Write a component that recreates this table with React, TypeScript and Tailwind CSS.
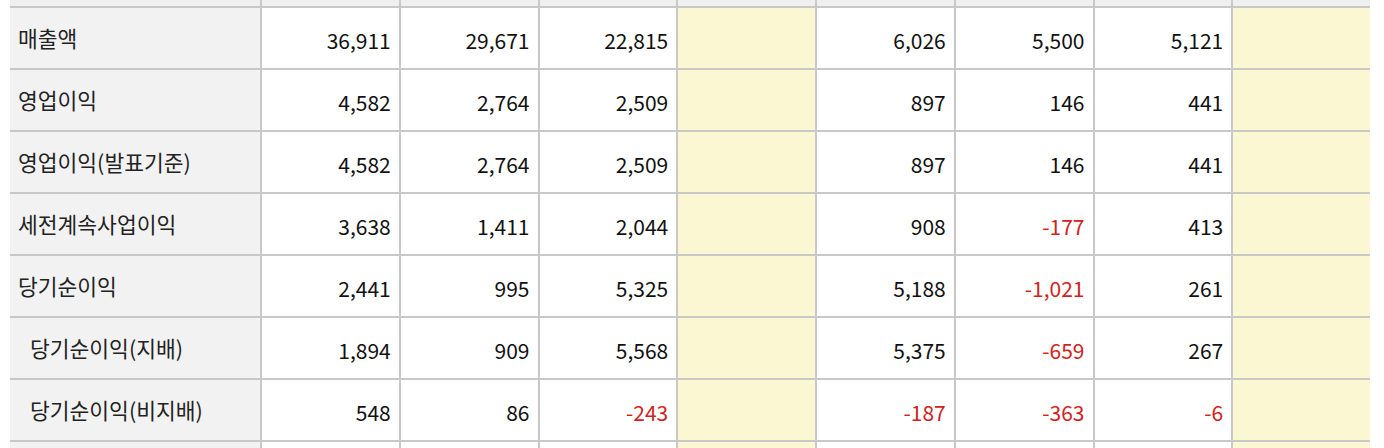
import React from 'react'

type Row = { label: string; indent?: boolean; values: (number | null)[] }

const rows: Row[] = [
  { label: '매출액', values: [36911, 29671, 22815, null, 6026, 5500, 5121, null] },
  { label: '영업이익', values: [4582, 2764, 2509, null, 897, 146, 441, null] },
  { label: '영업이익(발표기준)', values: [4582, 2764, 2509, null, 897, 146, 441, null] },
  { label: '세전계속사업이익', values: [3638, 1411, 2044, null, 908, -177, 413, null] },
  { label: '당기순이익', values: [2441, 995, 5325, null, 5188, -1021, 261, null] },
  { label: '당기순이익(지배)', indent: true, values: [1894, 909, 5568, null, 5375, -659, 267, null] },
  { label: '당기순이익(비지배)', indent: true, values: [548, 86, -243, null, -187, -363, -6, null] },
]

const fmt = (n: number) => n.toLocaleString('en-US')

// 4번째, 8번째 칸은 추정치 컬럼 (노란 배경)
const isEst = (i: number) => i === 3 || i === 7

function Cell({ value, index }: { value: number | null; index: number }) {
  return (
    <div
      className={`flex items-center justify-end pr-2 pt-1 text-[21px] ${isEst(index) ? 'bg-[#fcf7d3]' : 'bg-white'} ${
        value !== null && value < 0 ? 'text-[#d0231c]' : 'text-[#111]'
      }`}
    >
      {value !== null ? fmt(value) : ''}
    </div>
  )
}

export default function App() {
  return (
    <div className="w-[1384px] h-[448px] overflow-hidden bg-white pl-[10px] pr-[14px]">
      <div
        className="-mt-[55px] grid grid-cols-[250px_repeat(8,1fr)] gap-[2px] bg-[#c8c8c8] leading-none"
        style={{ fontFamily: '"Noto Sans CJK KR", "Noto Sans", sans-serif' }}
      >
        {/* 헤더 (잘린 부분) */}
        <div className="h-[61px] bg-[#f0f0f0]" />
        {Array.from({ length: 8 }).map((_, i) => (
          <div key={i} className="h-[61px] bg-[#f0f0f0]" />
        ))}

        {rows.map((row) => (
          <React.Fragment key={row.label}>
            <div
              className={`h-[60px] flex items-center text-[21.5px] bg-[#f2f2f2] text-[#222] ${row.indent ? 'pl-5' : 'pl-2'}`}
            >
              {row.label}
            </div>
            {row.values.map((v, i) => (
              <Cell key={i} value={v} index={i} />
            ))}
          </React.Fragment>
        ))}

        {/* 다음 행 (잘린 부분) */}
        <div className="h-[60px] bg-[#f2f2f2]" />
        {Array.from({ length: 8 }).map((_, i) => (
          <div key={i} className={`h-[60px] ${isEst(i) ? 'bg-[#fcf7d3]' : 'bg-white'}`} />
        ))}
      </div>
    </div>
  )
}
